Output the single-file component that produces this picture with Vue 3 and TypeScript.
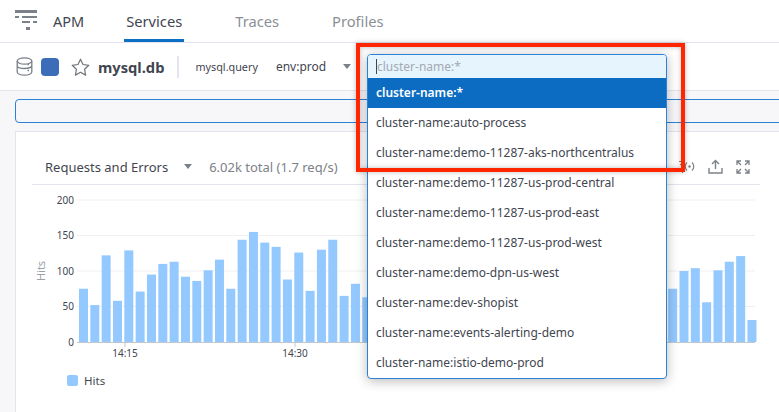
<script setup lang="ts">
import { computed } from 'vue'

const tabs = ['Services', 'Traces', 'Profiles']

const clusters = [
  'cluster-name:auto-process',
  'cluster-name:demo-11287-aks-northcentralus',
  'cluster-name:demo-11287-us-prod-central',
  'cluster-name:demo-11287-us-prod-east',
  'cluster-name:demo-11287-us-prod-west',
  'cluster-name:demo-dpn-us-west',
  'cluster-name:dev-shopist',
  'cluster-name:events-alerting-demo',
  'cluster-name:istio-demo-prod',
]

const hits = [
  75, 52, 122, 58, 129, 71, 95, 110, 113, 92, 86, 101, 116, 75, 144, 155, 140, 134, 88, 126,
  72, 130, 144, 65, 82, 63, 90, 104, 88, 76, 97, 110, 84, 70, 92, 118, 101, 86, 74, 99,
  108, 93, 80, 71, 96, 112, 87, 69, 91, 105, 83, 78, 75, 100, 104, 56, 101, 113, 121, 31,
]

// chart svg starts at page x=32, y=185
const baseY = 157
const unit = 0.71
const bars = computed(() =>
  hits.map((v, i) => ({
    x: 47 + i * 11.33,
    y: baseY - v * unit,
    h: v * unit,
  })),
)
const ticks = [200, 150, 100, 50, 0].map((v) => ({ v, y: baseY - v * unit }))
</script>

<template>
  <div class="page">
    <header class="topbar">
      <svg class="menu-icon" width="22" height="20" viewBox="0 0 22 20">
        <path d="M0 0h22v3H0zM0 6h4v2H0zM7 6h15v2H7zM7 11h8v2H7zM18 11h4v2h-4zM11 17h4v3h-4z" fill="#7b8188" />
      </svg>
      <span class="apm">APM</span>
      <nav class="tabs">
        <a v-for="(tab, i) in tabs" :key="tab" class="tab" :class="{ active: i === 0 }">{{ tab }}</a>
      </nav>
    </header>

    <section class="service-bar">
      <svg class="db-icon" width="17" height="19" viewBox="0 0 17 19" fill="none" stroke="#7b8188" stroke-width="1.3">
        <ellipse cx="8.500" cy="4" rx="7.300" ry="3.200" />
        <path d="M1.200 4v11c0 1.800 3.300 3.200 7.300 3.200s7.300-1.400 7.300-3.200V4M1.200 8.500c0 1.800 3.300 3 7.300 3s7.300-1.200 7.300-3" />
        <path d="M11.500 7.500h1.500M11.500 13.500h1.500" />
      </svg>
      <span class="swatch"></span>
      <svg class="star" width="19" height="18" viewBox="0 0 19 18" fill="none" stroke="#6d737a" stroke-width="1.200" stroke-linejoin="round">
        <path d="M9.500 1.200l2.500 5.300 5.800.8-4.200 4 1 5.800-5.100-2.800-5.100 2.800 1-5.800-4.200-4 5.800-.8z" />
      </svg>
      <strong class="service-name">mysql.db</strong>
      <span class="divider"></span>
      <span class="op">mysql.query</span>
      <span class="env">env:prod</span>
      <span class="caret"></span>
    </section>

    <main class="content">
      <div class="banner"></div>
      <section class="card">
        <div class="card-head">
          <span class="card-title">Requests and Errors</span>
          <span class="caret title-caret"></span>
          <span class="card-total">6.02k total (1.7 req/s)</span>
          <span class="card-actions">
            <svg width="16" height="13" viewBox="0 0 16 13" fill="none" stroke="#7b8188" stroke-width="1.200">
              <path d="M0 1.500h5M1 4.500h4M2 7.500h3M1 10.500h4M3.500 0v13" />
              <circle cx="10.500" cy="6.500" r="1.200" fill="#7b8188" stroke="none" />
              <path d="M8 2.500a5.500 5.500 0 0 0 0 8M13 2.500a5.500 5.500 0 0 1 0 8" />
            </svg>
            <svg width="15" height="15" viewBox="0 0 15 15" fill="none" stroke="#7b8188" stroke-width="1.400">
              <path d="M7.500 10V1.500M4 5l3.500-3.500L11 5M1 9v5h13V9" />
            </svg>
            <svg width="14" height="14" viewBox="0 0 14 14" fill="none" stroke="#7b8188" stroke-width="1.300">
              <path d="M1 5V1h4M1 1l4 4M9 1h4v4M13 1L9 5M1 9v4h4M1 13l4-4M13 9v4H9M13 13L9 9" />
            </svg>
          </span>
        </div>

        <svg class="chart" width="728" height="176" viewBox="0 0 728 176">
          <line v-for="t in ticks.slice(0, 4)" :key="t.v" x1="45" x2="723" :y1="t.y" :y2="t.y" stroke="#f0f0f4" />
          <text v-for="t in ticks" :key="'l' + t.v" x="42" :y="t.y + 3.500" text-anchor="end" class="axis">{{ t.v }}</text>
          <text class="axis-title" transform="translate(13 86) rotate(-90)" text-anchor="middle">Hits</text>
          <rect v-for="(b, i) in bars" :key="i" :x="b.x" :y="b.y" width="9" :height="b.h" fill="#94c9ff" />
          <line x1="45" x2="723" :y1="baseY + 0.500" :y2="baseY + 0.500" stroke="#c4c6cc" />
          <line x1="93" x2="93" :y1="baseY" :y2="baseY + 5" stroke="#c4c6cc" />
          <line x1="263" x2="263" :y1="baseY" :y2="baseY + 5" stroke="#c4c6cc" />
          <text x="93" :y="baseY + 15" text-anchor="middle" class="axis">14:15</text>
          <text x="263" :y="baseY + 15" text-anchor="middle" class="axis">14:30</text>
        </svg>

        <div class="legend">
          <span class="legend-swatch"></span>
          <span>Hits</span>
        </div>
      </section>
    </main>

    <div class="dropdown">
      <div class="search">
        <span class="cursor"></span>
        <span class="placeholder">cluster-name:*</span>
      </div>
      <div class="option selected">cluster-name:*</div>
      <div v-for="c in clusters" :key="c" class="option">{{ c }}</div>
    </div>

    <div class="highlight"></div>
  </div>
</template>

<style scoped>
.page {
  position: relative;
  width: 779px;
  height: 412px;
  overflow: hidden;
  background: #fff;
  font-family: "Noto Sans", "Open Sans", sans-serif;
  color: #3f4650;
  display: flex;
  flex-direction: column;
}

.topbar {
  height: 42px;
  flex: none;
  display: flex;
  align-items: center;
  box-sizing: content-box;
  border-bottom: 1px solid #e4e4ee;
}

.menu-icon {
  align-self: flex-start;
  margin: 10px 0 0 15px;
}

.apm {
  margin-left: 16px;
  font-size: 14.500px;
}

.tabs {
  display: flex;
  align-self: stretch;
  margin-left: 40px;
  gap: 49px;
}

.tab {
  display: flex;
  align-items: center;
  padding: 0 2px;
  font-size: 14.700px;
  color: #8a8f96;
  border-bottom: 3px solid transparent;
  padding-top: 3px;
}

.tab.active {
  color: #3f4650;
  border-bottom-color: #0b6fc4;
}

.service-bar {
  height: 48px;
  flex: none;
  display: flex;
  align-items: center;
  box-sizing: border-box;
  border-bottom: 1px solid #e4e4ee;
  padding-left: 16px;
}

.swatch {
  width: 18px;
  height: 18px;
  margin-left: 8px;
  border-radius: 4px;
  background: #3b6db8;
}

.star {
  margin-left: 12px;
}

.service-name {
  margin-left: 8px;
  font-size: 14.700px;
  font-weight: 700;
}

.divider {
  width: 2px;
  height: 22px;
  margin-left: 13px;
  background: #e4e4ee;
}

.op {
  margin-left: 16px;
  font-size: 10.800px;
}

.env {
  margin-left: 18px;
  font-size: 12px;
}

.caret {
  width: 0;
  height: 0;
  margin-left: 17px;
  border-left: 4px solid transparent;
  border-right: 4px solid transparent;
  border-top: 5px solid #7b8188;
}

.content {
  flex: 1;
  display: flex;
  flex-direction: column;
  background: #f7f7fa;
  padding: 8px 0 0 15px;
  gap: 8px;
}

.banner {
  height: 24px;
  flex: none;
  margin-right: -10px;
  box-sizing: border-box;
  border: 1px solid #2a82d8;
  border-radius: 4px;
  background: #f7f7fa;
}

.card {
  flex: 1;
  margin-right: -10px;
  margin-bottom: -4px;
  background: #fff;
  border: 1px solid #e4e4ee;
  padding: 0 0 0 16px;
}

.card-head {
  width: 728px;
  height: 53px;
  box-sizing: border-box;
  display: flex;
  align-items: center;
  padding: 17px 10px 0 13px;
  border-bottom: 1px solid #e4e4ee;
}

.card-title {
  font-size: 13px;
}

.title-caret {
  margin-left: 16px;
}

.card-total {
  margin-left: 17px;
  font-size: 13px;
  color: #7b8188;
}

.card-actions {
  margin-left: auto;
  display: flex;
  align-items: center;
  gap: 13px;
}

.chart {
  display: block;
}

.axis {
  font-size: 10px;
  fill: #3f4650;
}

.axis-title {
  font-size: 11px;
  fill: #9aa0a6;
}

.legend {
  display: flex;
  align-items: center;
  gap: 6px;
  margin: 12px 0 0 35px;
  font-size: 11.500px;
}

.legend-swatch {
  width: 11px;
  height: 11px;
  border-radius: 2px;
  background: #94c9ff;
}

.dropdown {
  position: absolute;
  left: 367px;
  top: 54px;
  width: 300px;
  box-sizing: border-box;
  background: #fff;
  border: 1px solid #2a82d8;
  border-radius: 4px;
  box-shadow: 0 2px 12px rgba(0, 0, 0, 0.28);
  overflow: hidden;
}

.search {
  height: 23px;
  display: flex;
  align-items: center;
  padding-left: 8px;
  background: #e6f4fe;
  font-size: 12px;
}

.cursor {
  width: 1px;
  height: 15px;
  background: #3f4650;
}

.placeholder {
  color: #a3a9af;
}

.option {
  height: 30px;
  box-sizing: border-box;
  display: flex;
  align-items: center;
  padding: 0 0 1px 8px;
  font-size: 12px;
}

.option.selected {
  background: #0b6cc2;
  color: #fff;
  font-weight: 600;
}

.highlight {
  position: absolute;
  left: 356px;
  top: 43px;
  width: 329px;
  height: 129px;
  box-sizing: border-box;
  border: 4px solid #ff2600;
  box-shadow: 0 0 5px rgba(0, 0, 0, 0.25), inset 0 0 5px rgba(0, 0, 0, 0.25);
  pointer-events: none;
}
</style>
